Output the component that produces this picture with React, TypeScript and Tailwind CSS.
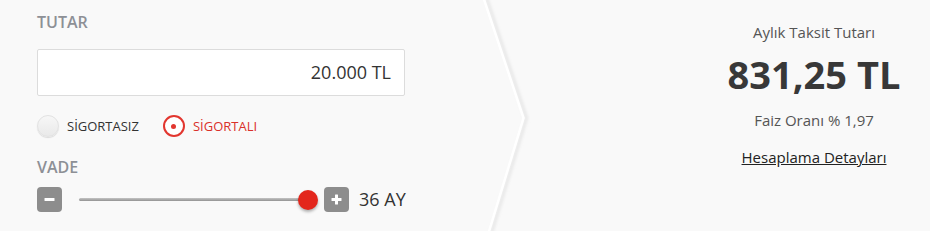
import React from "react";

function Radio({ checked, label }: { checked?: boolean; label: string }) {
  return (
    <div className="flex items-center">
      {checked ? (
        <span className="w-[22px] h-[22px] rounded-full border-2 border-[#e2362f] bg-white flex items-center justify-center">
          <span className="w-[5px] h-[5px] rounded-full bg-[#e2362f]" />
        </span>
      ) : (
        <span className="w-[22px] h-[22px] rounded-full border border-[#e2e2e2] bg-gradient-to-b from-[#f7f7f7] to-[#e9e9e9] shadow-[0_1px_1px_rgba(0,0,0,0.12)]" />
      )}
      <span
        className={`ml-[8px] text-[13px] leading-[20px] ${
          checked ? "text-[#d9302a]" : "text-[#333]"
        }`}
      >
        {label}
      </span>
    </div>
  );
}

function StepButton({ sign }: { sign: "-" | "+" }) {
  return (
    <button className="w-[25px] h-[25px] rounded-[4px] bg-[#8d8d8d] flex items-center justify-center shrink-0">
      <svg width="11" height="11" viewBox="0 0 11 11">
        <rect x="0.5" y="4" width="10" height="3" rx="0.5" fill="#fff" />
        {sign === "+" && <rect x="4" y="0.5" width="3" height="10" rx="0.5" fill="#fff" />}
      </svg>
    </button>
  );
}

export default function App() {
  return (
    <div className="w-[930px] h-[231px] bg-[#f9f9f9] flex font-['Open_Sans',sans-serif] overflow-hidden">
      {/* Left: amount + term */}
      <div className="w-[470px] shrink-0 pl-[37px] pt-[11px]">
        <div className="text-[16px] leading-[22px] font-semibold text-[#8d9096]">TUTAR</div>
        <div className="mt-[16px] w-[368px] h-[47px] bg-white border border-[#dcdcdc] rounded-[2px] flex items-center justify-end pr-[13px]">
          <span className="text-[18px] text-[#333]">20.000 TL</span>
        </div>
        <div className="mt-[19px] h-[22px] flex items-center gap-[24px]">
          <Radio label="SİGORTASIZ" />
          <Radio checked label="SİGORTALI" />
        </div>
        <div className="mt-[19px] text-[16px] leading-[22px] font-semibold text-[#8d9096]">VADE</div>
        <div className="mt-[9px] h-[25px] flex items-center">
          <StepButton sign="-" />
          <div className="ml-[17px] w-[239px] h-[20px] relative flex items-center">
            <div className="w-[225px] h-[3px] rounded-full bg-gradient-to-b from-[#c4c4c4] to-[#939393]" />
            <span className="absolute right-0 top-0 w-[20px] h-[20px] rounded-full bg-[#e3261c] shadow-[0_2px_3px_rgba(0,0,0,0.3)]" />
          </div>
          <div className="ml-[6px]">
            <StepButton sign="+" />
          </div>
          <span className="ml-[10px] text-[18px] text-[#333]">36 AY</span>
        </div>
      </div>

      {/* Chevron divider */}
      <svg width="70" height="231" viewBox="0 0 70 231" className="shrink-0">
        <defs>
          <filter id="soft" x="-50%" y="-10%" width="200%" height="120%">
            <feGaussianBlur stdDeviation="1.6" />
          </filter>
        </defs>
        <polyline
          points="15,-2 55,118 20,233"
          fill="none"
          stroke="#e6e6e6"
          strokeWidth="3"
          filter="url(#soft)"
          transform="translate(1.5,0)"
        />
        <polyline points="13.5,-2 53.5,118 18.5,233" fill="none" stroke="#ffffff" strokeWidth="2.5" />
      </svg>

      {/* Right: result */}
      <div className="flex-1 pl-[158px] pt-[22px] flex flex-col items-center text-center">
        <div className="text-[15px] leading-[20px] text-[#555]">Aylık Taksit Tutarı</div>
        <div className="mt-[10px] text-[38px] leading-[44px] font-bold text-[#383838]">831,25 TL</div>
        <div className="mt-[14px] text-[15px] leading-[20px] font-medium text-[#555]">Faiz Oranı % 1,97</div>
        <a className="mt-[17px] text-[15px] leading-[20px] text-[#222] underline">Hesaplama Detayları</a>
      </div>
    </div>
  );
}
